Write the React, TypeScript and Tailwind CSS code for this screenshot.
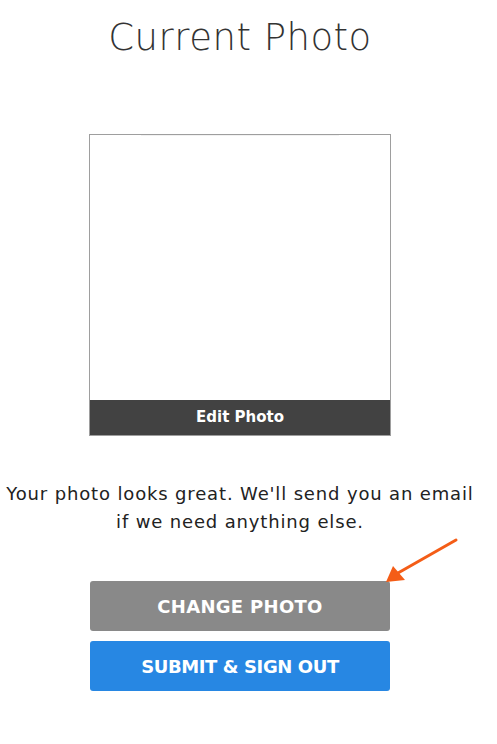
import React from "react";

export default function App() {
  const font = { fontFamily: '"DejaVu Sans", "Noto Sans", sans-serif' };
  return (
    <div className="w-[497px] h-[744px] bg-white relative" style={font}>
      <div className="w-[480px] flex flex-col items-center">
        <h1 className="mt-[14px] h-[48px] text-[37px] leading-[48px] font-extralight text-[#333333] tracking-[0.5px] whitespace-nowrap">
          Current Photo
        </h1>
        <div className="mt-[72px] w-[302px] h-[302px] border border-[#9e9e9e] flex flex-col">
          <div className="flex-1 flex justify-center">
            <div className="w-[198px] h-px bg-[#f2f2f2]" />
          </div>
          <div className="h-[35px] bg-[#424242] flex items-center justify-center text-white text-[15px] font-bold">
            Edit Photo
          </div>
        </div>
        <p className="mt-[44px] w-[480px] text-center text-[18px] leading-[28px] text-[#222222] tracking-[0.85px] whitespace-nowrap">
          Your photo looks great. We'll send you an email
          <br />
          if we need anything else.
        </p>
        <button className="mt-[45px] w-[300px] h-[50px] rounded-[3px] bg-[#898989] text-white text-[18px] font-bold tracking-[0.3px]">
          CHANGE PHOTO
        </button>
        <button className="mt-[10px] w-[300px] h-[50px] rounded-[3px] bg-[#2787e3] text-white text-[18px] font-bold tracking-[-0.4px]">
          SUBMIT &amp; SIGN OUT
        </button>
      </div>
      <svg className="absolute left-0 top-0 pointer-events-none" width="497" height="744">
        <line x1="456" y1="540" x2="398" y2="573" stroke="#f45d17" strokeWidth="3" strokeLinecap="round" />
        <polygon points="386,582 393,566 405,580" fill="#f45d17" />
      </svg>
    </div>
  );
}
